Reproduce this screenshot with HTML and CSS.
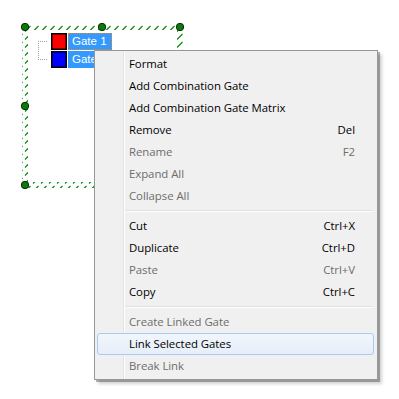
FILE: index.html
```html
<!DOCTYPE html>
<html>
<head>
<meta charset="utf-8">
<link rel="stylesheet" href="styles.css">
</head>
<body>
<div class="canvas">
  <svg class="frame" width="399" height="399" viewBox="0 0 399 399">
    <defs>
      <pattern id="hatch" patternUnits="userSpaceOnUse" width="8" height="8">
        <path d="M1,7.5 L6.5,2" stroke="#008000" stroke-width="1.1" fill="none"/>
      </pattern>
    </defs>
    <path d="M22,24 H183 V188 H22 Z M28,30 V182 H177 V30 Z" fill="url(#hatch)" fill-rule="evenodd"/>
    <g fill="#0b7a0b" stroke="#0a2a0a" stroke-width="1">
      <circle cx="25" cy="27" r="3.7"/>
      <circle cx="102" cy="27" r="3.7"/>
      <circle cx="180" cy="27" r="3.7"/>
      <circle cx="25" cy="106" r="3.7"/>
      <circle cx="25" cy="185" r="3.7"/>
      <circle cx="180" cy="106" r="3.7"/>
      <circle cx="102" cy="185" r="3.7"/>
      <circle cx="180" cy="185" r="3.7"/>
    </g>
    <path class="dots" d="M38.5,41 V59 M38,41.5 H48 M38,59.5 H48" stroke="#a0a0a0" stroke-width="1" stroke-dasharray="1 1" fill="none"/>
  </svg>
  <div class="tree">
    <div class="node">
      <span class="swatch red"></span>
      <span class="label focus">Gate 1</span>
    </div>
    <div class="node">
      <span class="swatch blue"></span>
      <span class="label">Gate 2</span>
    </div>
  </div>
</div>

<div class="menu">
  <div class="item"><span>Format</span></div>
  <div class="item"><span>Add Combination Gate</span></div>
  <div class="item"><span>Add Combination Gate Matrix</span></div>
  <div class="item"><span>Remove</span><span class="key">Del</span></div>
  <div class="item disabled"><span>Rename</span><span class="key">F2</span></div>
  <div class="item disabled"><span>Expand All</span></div>
  <div class="item disabled"><span>Collapse All</span></div>
  <div class="sep"></div>
  <div class="item"><span>Cut</span><span class="key">Ctrl+X</span></div>
  <div class="item"><span>Duplicate</span><span class="key">Ctrl+D</span></div>
  <div class="item disabled"><span>Paste</span><span class="key">Ctrl+V</span></div>
  <div class="item"><span>Copy</span><span class="key">Ctrl+C</span></div>
  <div class="sep"></div>
  <div class="item disabled"><span>Create Linked Gate</span></div>
  <div class="item hot"><span>Link Selected Gates</span></div>
  <div class="item disabled"><span>Break Link</span></div>
</div>
</body>
</html>
```

FILE: styles.css
```css
html, body {
  margin: 0;
  padding: 0;
  background: #ffffff;
  width: 399px;
  height: 399px;
  overflow: hidden;
}

.canvas {
  position: relative;
  width: 399px;
  height: 399px;
}

.frame {
  position: absolute;
  left: 0;
  top: 0;
}

.frame .dots {
  shape-rendering: crispEdges;
}

.tree {
  position: absolute;
  left: 51px;
  top: 33px;
  display: flex;
  flex-direction: column;
  gap: 1px;
}

.node {
  display: flex;
  align-items: stretch;
  height: 17px;
  gap: 1px;
}

.swatch {
  width: 14px;
  height: 15px;
  border: 1px solid #000;
  box-shadow: inset 0 0 0 0.5px #000;
  align-self: center;
}

.red { background: #ff0000; }
.blue { background: #0000ff; }

.label {
  background: #3399ff;
  color: #ffffff;
  font-family: "Liberation Sans", Arial, sans-serif;
  font-size: 11.5px;
  line-height: 17px;
  padding: 0 4px 0 3px;
  box-sizing: border-box;
  border: 1px solid transparent;
  display: flex;
  align-items: center;
}

.label.focus {
  border: 1px dotted #e08a2a;
}

.menu {
  position: absolute;
  left: 94px;
  top: 50px;
  width: 284px;
  box-sizing: border-box;
  border: 1px solid #979797;
  padding: 2px 3px 2px 2px;
  background:
    linear-gradient(to right, transparent 28px, #e2e3e3 28px, #e2e3e3 29px, #ffffff 29px, #ffffff 30px, transparent 30px) no-repeat,
    #f0f0f0;
  background-origin: padding-box;
  box-shadow: 2px 2px 0 0 rgba(0,0,0,0.28), 4px 4px 3px rgba(0,0,0,0.18);
  font-family: "Open Sans", "Noto Sans", sans-serif;
  font-size: 11.4px;
  letter-spacing: -0.05px;
  color: #000;
}

.item {
  height: 22px;
  line-height: 22px;
  display: flex;
  justify-content: space-between;
  padding: 0 18px 0 31px;
  box-sizing: border-box;
  border: 1px solid transparent;
  border-radius: 3px;
  white-space: nowrap;
}

.item span {
  line-height: 20px;
}

.item.disabled {
  color: #6d6d6d;
}

.item.hot {
  border-color: #a9cbf3;
  background: linear-gradient(to bottom, #f1f6fc, #e6eef9);
}

.sep {
  height: 8px;
  margin: 0 2px 0 28px;
  background: linear-gradient(to bottom, transparent 3px, #e0e0e0 3px, #e0e0e0 4px, #ffffff 4px, #ffffff 5px, transparent 5px);
}
```
